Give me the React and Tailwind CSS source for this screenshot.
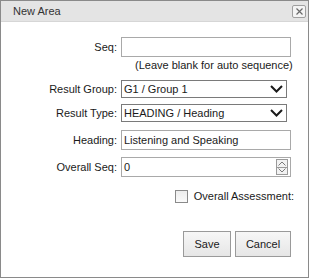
import React from "react";

function Label({ children }) {
  return (
    <div className="w-[117px] shrink-0 pr-[1px] text-right">{children}</div>
  );
}

function Chevron() {
  return (
    <svg width="13" height="8" viewBox="0 0 13 8" className="absolute right-[3px] top-1/2 -translate-y-1/2">
      <polyline points="1,1 6.5,6.5 12,1" fill="none" stroke="#1a1a1a" strokeWidth="2" />
    </svg>
  );
}

function Select({ value }) {
  return (
    <div className="relative ml-[3px] flex h-[18px] w-[166px] items-center border border-[#7a7a7a] bg-white pl-[2px]">
      <span>{value}</span>
      <Chevron />
    </div>
  );
}

function TextBox({ value, spinner }) {
  return (
    <div className="relative ml-[3px] flex h-[20px] w-[170px] items-center border border-[#a9a9a9] bg-white pl-[2px]">
      <span>{value}</span>
      {spinner && (
        <div className="absolute right-[2px] top-[1px] flex h-[16px] w-[12px] flex-col border border-[#9a9a9a] bg-[#f2f2f2]">
          <div className="flex flex-1 items-center justify-center border-b border-[#9a9a9a]">
            <svg width="8" height="5" viewBox="0 0 8 5">
              <polyline points="0.5,4.5 4,1 7.5,4.5" fill="none" stroke="#7a7a7a" strokeWidth="1" />
            </svg>
          </div>
          <div className="flex flex-1 items-center justify-center">
            <svg width="8" height="5" viewBox="0 0 8 5">
              <polyline points="0.5,0.5 4,4 7.5,0.5" fill="none" stroke="#7a7a7a" strokeWidth="1" />
            </svg>
          </div>
        </div>
      )}
    </div>
  );
}

function Button({ children, width }) {
  return (
    <button
      className={`h-[26px] ${width} border border-[#9a9a9a] bg-gradient-to-b from-[#f7f7f7] to-[#e6e6e6] text-[11px] text-[#1a1a1a]`}
    >
      {children}
    </button>
  );
}

export default function App() {
  return (
    <div
      className="h-[278px] w-[311px] bg-white text-[11px] leading-[13px] text-[#1a1a1a]"
      style={{ fontFamily: '"Liberation Sans", Arial, sans-serif' }}
    >
      <div className="flex h-[278px] w-[309px] flex-col border border-[#8a8a8a]">
        <div className="flex h-[21px] shrink-0 items-center justify-between border-b border-[#d6d6d6] bg-[#e4e4e4] pl-[12px] pr-[2px]">
          <span className="text-[#333]">New Area</span>
          <div className="flex h-[13px] w-[14px] items-center justify-center rounded-[2px] border border-[#a0a0a0] bg-[#f4f4f4]">
            <svg width="7" height="7" viewBox="0 0 7 7">
              <path d="M0.5 0.5 L6.5 6.5 M6.5 0.5 L0.5 6.5" stroke="#6a6a6a" strokeWidth="1.2" />
            </svg>
          </div>
        </div>

        <div className="flex flex-col pt-[15px]">
          <div className="flex items-center">
            <Label>Seq:</Label>
            <TextBox value="" />
          </div>
          <div className="mt-[2px] pl-[134px]">(Leave blank for auto sequence)</div>

          <div className="mt-[8px] flex items-center">
            <Label>Result Group:</Label>
            <Select value="G1 / Group 1" />
          </div>

          <div className="mt-[6px] flex items-center">
            <Label>Result Type:</Label>
            <Select value="HEADING / Heading" />
          </div>

          <div className="mt-[8px] flex items-center">
            <Label>Heading:</Label>
            <TextBox value="Listening and Speaking" />
          </div>

          <div className="mt-[7px] flex items-center">
            <Label>Overall Seq:</Label>
            <TextBox value="0" spinner />
          </div>

          <div className="mt-[13px] flex items-center justify-end pr-[14px]">
            <div className="h-[13px] w-[13px] border border-[#8a8a8a] bg-gradient-to-b from-[#ededed] to-[#fafafa]" />
            <span className="ml-[6px]">Overall Assessment:</span>
          </div>

          <div className="mt-[28px] flex justify-end gap-[4px] pr-[17px]">
            <Button width="w-[48px]">Save</Button>
            <Button width="w-[56px]">Cancel</Button>
          </div>
        </div>
      </div>
    </div>
  );
}
